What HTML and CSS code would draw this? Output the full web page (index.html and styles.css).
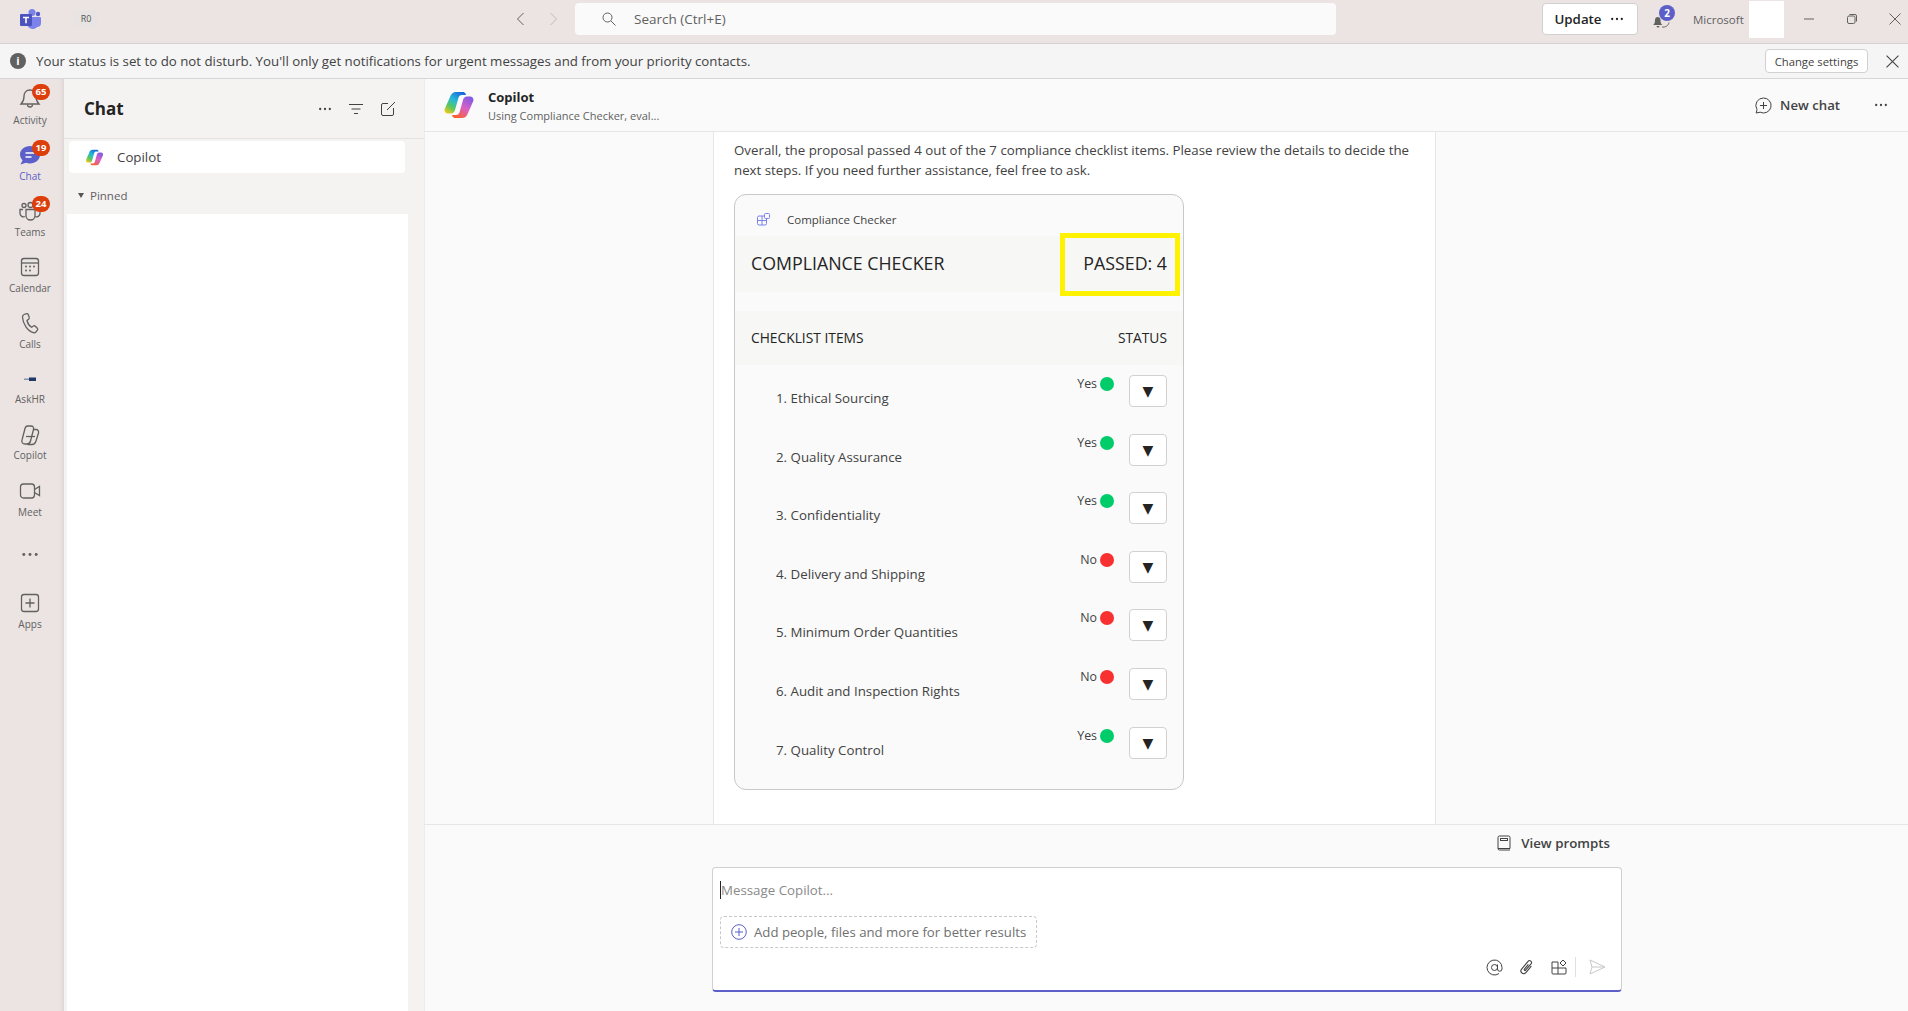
FILE: index.html
```html
<!DOCTYPE html>
<html lang="en">
<head>
    <meta charset="UTF-8">
    <meta name="viewport" content="width=device-width, initial-scale=1.0">
    <title>Microsoft Teams - Copilot</title>
    <link rel="stylesheet" href="styles.css">
</head>
<body>
    <svg class="defs" width="0" height="0" aria-hidden="true">
        <defs>
            <linearGradient id="copA" x1="0.75" y1="0" x2="0.15" y2="1">
                <stop offset="0" stop-color="#1668dc"/>
                <stop offset="0.4" stop-color="#26b8d8"/>
                <stop offset="0.72" stop-color="#5cc85a"/>
                <stop offset="1" stop-color="#f4c91c"/>
            </linearGradient>
            <linearGradient id="copB" x1="0.8" y1="0" x2="0.25" y2="1">
                <stop offset="0" stop-color="#7d5be8"/>
                <stop offset="0.5" stop-color="#d861c4"/>
                <stop offset="1" stop-color="#f8622e"/>
            </linearGradient>
            <symbol id="copilot" viewBox="0 0 32 32">
                <path fill="url(#copA)" d="M13 3h7c1 0 2 .6 2.500 1.500L23 6h-4c-2 0-3 1-3.600 3L12 21c-.6 2-2 3.500-4 3.500H5c-2.500 0-4-2.200-3.300-4.500L7 8c.9-3 3-5 6-5z"/>
                <path fill="url(#copB)" d="M19 29h-7c-1 0-2-.6-2.500-1.500L9 26h4c2 0 3-1 3.600-3L20 11c.6-2 2-3.500 4-3.500h3c2.500 0 4 2.200 3.300 4.500L25 24c-.9 3-3 5-6 5z"/>
            </symbol>
            <symbol id="dots" viewBox="0 0 16 4">
                <circle cx="2.500" cy="2" r="1.300" fill="currentColor"/>
                <circle cx="8" cy="2" r="1.300" fill="currentColor"/>
                <circle cx="13.500" cy="2" r="1.300" fill="currentColor"/>
            </symbol>
            <symbol id="cross" viewBox="0 0 12 12">
                <path d="M.5.500l11 11M11.500.500l-11 11" fill="none" stroke="currentColor"/>
            </symbol>
        </defs>
    </svg>

    <header class="topbar">
        <div class="top-left">
            <svg class="teams-logo" width="22" height="20" viewBox="0 0 22 20">
                <circle cx="19" cy="5" r="2.200" fill="#5059c9"/>
                <circle cx="13" cy="3.500" r="3.500" fill="#7b83eb"/>
                <path d="M8 8h13a1 1 0 0 1 1 1v5a4 4 0 0 1-4 4c-1 1.500-3 2-4.500 2A6 6 0 0 1 8 15z" fill="#7b83eb"/>
                <rect x="1" y="5" width="12" height="12" rx="1" fill="#4b53bc"/>
                <path d="M4 7.800h6v1.500H7.800v5H6.200v-5H4z" fill="#fff"/>
            </svg>
            <span class="org-chip">R0</span>
        </div>
        <div class="top-center">
            <svg class="nav-arrow" width="9" height="14" viewBox="0 0 9 14"><path d="M7.500 1L1.500 7l6 6" fill="none" stroke="#616161"/></svg>
            <svg class="nav-arrow" width="9" height="14" viewBox="0 0 9 14"><path d="M1.500 1l6 6-6 6" fill="none" stroke="#bdbdbd"/></svg>
            <div class="searchbox">
                <svg width="14" height="14" viewBox="0 0 14 14"><circle cx="5.500" cy="5.500" r="4.500" fill="none" stroke="#616161"/><path d="M9 9l4.500 4.500" stroke="#616161"/></svg>
                <span>Search (Ctrl+E)</span>
            </div>
        </div>
        <div class="top-right">
            <button class="update-btn">Update <svg width="14" height="4"><use href="#dots"/></svg></button>
            <div class="bell">
                <svg width="20" height="18" viewBox="0 0 20 18">
                    <path d="M1 15c1.500-1 2-2.500 2-5 0-2 1.200-3 2.800-3S8.500 8 8.500 10c0 2.500.5 4 2 5z" fill="#616161"/>
                    <path d="M4.500 16h3a1.500 1.500 0 0 1-3 0z" fill="#616161"/>
                    <path d="M10 17c3.500.5 6.500-1.500 7-4.500" fill="none" stroke="#616161"/>
                </svg>
                <span class="bell-count">2</span>
            </div>
            <span class="org-name">Microsoft</span>
            <div class="avatar-blank"></div>
            <div class="window-btns">
                <svg width="12" height="12" viewBox="0 0 12 12"><path d="M1 6h10" stroke="#616161"/></svg>
                <svg width="12" height="12" viewBox="0 0 12 12"><rect x="1.500" y="3" width="7.500" height="7.500" rx="1.500" fill="none" stroke="#616161"/><path d="M3.500 1.500H9a1.500 1.500 0 0 1 1.500 1.500v5.500" fill="none" stroke="#616161"/></svg>
                <svg width="12" height="12" color="#616161"><use href="#cross"/></svg>
            </div>
        </div>
    </header>

    <div class="notice">
        <span class="info-dot">i</span>
        <span class="notice-text">Your status is set to do not disturb. You'll only get notifications for urgent messages and from your priority contacts.</span>
        <button class="notice-btn">Change settings</button>
        <svg class="notice-close" width="13" height="13" color="#424242"><use href="#cross"/></svg>
    </div>

    <div class="app">
        <nav class="rail">
            <a class="rail-item">
                <svg width="24" height="24" viewBox="0 0 24 24" fill="none" stroke="#616161" stroke-width="1.300"><path d="M12 3c-4 0-6 3-6 6.500 0 4-1.500 6-3 7.500h18c-1.500-1.500-3-3.500-3-7.500C18 6 16 3 12 3z"/><path d="M9.500 17.500a2.500 2.500 0 0 0 5 0"/></svg>
                <span class="badge">65</span>
                <span>Activity</span>
            </a>
            <a class="rail-item active">
                <svg width="24" height="24" viewBox="0 0 24 24"><path d="M12 3c-5.500 0-10 3.800-10 8.500 0 2.200 1 4.200 2.600 5.700L2.500 21.500l5.500-1.800c1.200.5 2.600.8 4 .8 5.500 0 10-3.800 10-8.500S17.500 3 12 3z" fill="#5b5fc7"/><path d="M7.500 10h9M7.500 14h6" stroke="#fff" stroke-width="1.400"/></svg>
                <span class="badge">19</span>
                <span>Chat</span>
            </a>
            <a class="rail-item">
                <svg width="24" height="24" viewBox="0 0 24 24" fill="none" stroke="#616161" stroke-width="1.300"><circle cx="6" cy="6.500" r="2"/><circle cx="12.500" cy="6" r="2.500"/><path d="M8 10.500h9v6a4.500 4.500 0 0 1-9 0z"/><path d="M5 10.500H2v4a3.500 3.500 0 0 0 5 3M18 10.500h4v4a3.500 3.500 0 0 1-5 3"/></svg>
                <span class="badge">24</span>
                <span>Teams</span>
            </a>
            <a class="rail-item">
                <svg width="24" height="24" viewBox="0 0 24 24" fill="none" stroke="#616161" stroke-width="1.300"><rect x="3.500" y="3.500" width="17" height="17" rx="2.500"/><path d="M3.500 8h17"/><g fill="#616161" stroke="none"><circle cx="8" cy="11.500" r="1"/><circle cx="12" cy="11.500" r="1"/><circle cx="16" cy="11.500" r="1"/><circle cx="8" cy="15.500" r="1"/><circle cx="12" cy="15.500" r="1"/></g></svg>
                <span>Calendar</span>
            </a>
            <a class="rail-item">
                <svg width="24" height="24" viewBox="0 0 24 24" fill="none" stroke="#616161" stroke-width="1.300"><path d="M6 3.500l2.500-.8c.8-.2 1.400.2 1.700.9l1 2.600c.3.700.1 1.300-.4 1.800L9 9.500c.5 2.500 2.500 5.500 4.500 6.800l2-1.300c.6-.4 1.300-.3 1.800.2l2 2c.5.600.6 1.300.1 1.900l-1.500 1.900c-.6.700-1.500 1-2.400.7C9.500 20 5 13 4.500 6.200c-.1-1.200.5-2.300 1.500-2.700z"/></svg>
                <span>Calls</span>
            </a>
            <a class="rail-item tight">
                <svg width="24" height="24" viewBox="0 0 24 24"><rect x="6" y="11.500" width="5" height="1.500" fill="#8a94a8"/><rect x="11" y="10.500" width="7" height="3.500" fill="#1f3864"/></svg>
                <span>AskHR</span>
            </a>
            <a class="rail-item tight">
                <svg width="24" height="24" viewBox="0 0 24 24" fill="none" stroke="#616161" stroke-width="1.300"><path d="M9.500 3h3.500c2 0 3 1.500 2.500 3.500l-3 11.500c-.4 1.800-1.500 3-3.500 3H7c-2.500 0-3.700-2-3-4l3-11.500C7.400 4 8.200 3 9.500 3z"/><path d="M15 6.500h3c2 0 3 1.600 2.500 3.500l-2.500 8c-.6 2-2 3.500-4 3.500H9.500"/><path d="M8 13.500h9"/></svg>
                <span>Copilot</span>
            </a>
            <a class="rail-item">
                <svg width="24" height="24" viewBox="0 0 24 24" fill="none" stroke="#616161" stroke-width="1.300"><rect x="2.500" y="5" width="14" height="14" rx="3"/><path d="M16.500 10.500l5-3v9l-5-3"/></svg>
                <span>Meet</span>
            </a>
            <a class="rail-more"><svg width="18" height="5" color="#616161"><use href="#dots"/></svg></a>
            <a class="rail-item">
                <svg width="24" height="24" viewBox="0 0 24 24" fill="none" stroke="#616161" stroke-width="1.300"><rect x="3.500" y="3.500" width="17" height="17" rx="2.500"/><path d="M12 7.500v9M7.500 12h9"/></svg>
                <span>Apps</span>
            </a>
        </nav>

        <aside class="chatlist">
            <div class="chatlist-head">
                <h2>Chat</h2>
                <svg width="14" height="4" color="#424242"><use href="#dots"/></svg>
                <svg width="16" height="12" viewBox="0 0 16 12"><path d="M1 1.500h14M3.500 6h9M6 10.500h4" stroke="#424242"/></svg>
                <svg width="16" height="16" viewBox="0 0 16 16" fill="none" stroke="#424242"><path d="M8 2.500H3A1.500 1.500 0 0 0 1.500 4v9A1.500 1.500 0 0 0 3 14.500h9a1.500 1.500 0 0 0 1.500-1.500V7"/><path d="M7 9l8-8"/></svg>
            </div>
            <div class="chatlist-row">
                <svg width="19" height="19"><use href="#copilot"/></svg>
                <span>Copilot</span>
            </div>
            <div class="pinned"><span class="caret"></span>Pinned</div>
            <div class="chatlist-blank"></div>
        </aside>

        <main class="conv">
            <div class="conv-head">
                <svg width="32" height="32"><use href="#copilot"/></svg>
                <div class="conv-title">
                    <strong>Copilot</strong>
                    <span>Using Compliance Checker, eval...</span>
                </div>
                <div class="conv-actions">
                    <svg width="17" height="17" viewBox="0 0 17 17" fill="none" stroke="#424242"><path d="M8.500 1a7.500 7.500 0 1 1-3.300 14.200L1.200 16l.8-3.500A7.500 7.500 0 0 1 8.500 1z"/><path d="M8.500 5v7M5 8.500h7"/></svg>
                    <span>New chat</span>
                    <svg class="conv-dots" width="14" height="4" color="#424242"><use href="#dots"/></svg>
                </div>
            </div>

            <div class="scroll-area">
                <div class="message">
                    <p>Overall, the proposal passed 4 out of the 7 compliance checklist items. Please review the details to decide the next steps. If you need further assistance, feel free to ask.</p>
                    <div class="card">
                        <div class="card-top">
                            <svg width="13" height="13" viewBox="0 0 13 13" fill="none" stroke="#7b83eb"><rect x=".5" y="3" width="9" height="9" rx="1.500"/><path d="M5 3v9M.5 7.500h9"/><rect x="7.500" y=".5" width="5" height="5" rx="1" fill="#fafafa"/></svg>
                            <span>Compliance Checker</span>
                        </div>
                        <div class="card-band">
                            <span>COMPLIANCE CHECKER</span>
                            <span>PASSED: 4</span>
                            <div class="highlight"></div>
                        </div>
                        <div class="card-cols">
                            <span>CHECKLIST ITEMS</span>
                            <span>STATUS</span>
                        </div>
                        <div class="check-row">
                            <span class="check-name">1. Ethical Sourcing</span>
                            <span class="check-val">Yes</span><span class="dot green"></span>
                            <button class="expand">&#9660;</button>
                        </div>
                        <div class="check-row">
                            <span class="check-name">2. Quality Assurance</span>
                            <span class="check-val">Yes</span><span class="dot green"></span>
                            <button class="expand">&#9660;</button>
                        </div>
                        <div class="check-row">
                            <span class="check-name">3. Confidentiality</span>
                            <span class="check-val">Yes</span><span class="dot green"></span>
                            <button class="expand">&#9660;</button>
                        </div>
                        <div class="check-row">
                            <span class="check-name">4. Delivery and Shipping</span>
                            <span class="check-val">No</span><span class="dot red"></span>
                            <button class="expand">&#9660;</button>
                        </div>
                        <div class="check-row">
                            <span class="check-name">5. Minimum Order Quantities</span>
                            <span class="check-val">No</span><span class="dot red"></span>
                            <button class="expand">&#9660;</button>
                        </div>
                        <div class="check-row">
                            <span class="check-name">6. Audit and Inspection Rights</span>
                            <span class="check-val">No</span><span class="dot red"></span>
                            <button class="expand">&#9660;</button>
                        </div>
                        <div class="check-row">
                            <span class="check-name">7. Quality Control</span>
                            <span class="check-val">Yes</span><span class="dot green"></span>
                            <button class="expand">&#9660;</button>
                        </div>
                    </div>
                </div>
            </div>

            <div class="compose-area">
                <div class="prompts">
                    <svg width="14" height="16" viewBox="0 0 14 16" fill="none" stroke="#424242"><path d="M1 13.500V2.500A1.500 1.500 0 0 1 2.500 1h9A1.500 1.500 0 0 1 13 2.500v11z"/><path d="M1 13.500A1.500 1.500 0 0 0 2.500 15H13"/><rect x="3.500" y="3.500" width="7" height="2"/></svg>
                    <span>View prompts</span>
                </div>
                <div class="composer">
                    <div class="placeholder"><span class="cursor"></span>Message Copilot...</div>
                    <div class="add-ctx">
                        <svg width="16" height="16" viewBox="0 0 16 16" fill="none" stroke="#5b5fc7"><circle cx="8" cy="8" r="7.300"/><path d="M8 4v8M4 8h8"/></svg>
                        <span>Add people, files and more for better results</span>
                    </div>
                    <div class="composer-tools">
                        <svg width="17" height="17" viewBox="0 0 17 17" fill="none" stroke="#424242"><circle cx="8.500" cy="8.500" r="3"/><path d="M11.500 5.500V10a2.200 2.200 0 0 0 4.500 0V8.500a7.500 7.500 0 1 0-3 6"/></svg>
                        <svg width="18" height="18" viewBox="0 0 16 16" fill="none" stroke="#424242"><path transform="rotate(40 8 8)" d="M10.500 5v7.500a2.500 2.500 0 0 1-5 0V3.500a1.700 1.700 0 0 1 3.400 0V11a.7.7 0 0 1-1.400 0V5.500"/></svg>
                        <svg width="16" height="16" viewBox="0 0 16 16" fill="none" stroke="#424242"><path d="M1 3h6v12H2a1 1 0 0 1-1-1zM7 9h8v5a1 1 0 0 1-1 1H7M1 9h6"/><path d="M12 1l3 3-3 3-3-3z"/></svg>
                        <span class="tool-sep"></span>
                        <svg width="17" height="16" viewBox="0 0 17 16" fill="none" stroke="#c8c8c8"><path d="M1 1l15 7-15 7 2-7zM3 8h13"/></svg>
                    </div>
                </div>
            </div>
        </main>
    </div>
</body>
</html>
```

FILE: styles.css
```css
* {
    box-sizing: border-box;
}
html, body {
    margin: 0;
    height: 100%;
}
body {
    font-family: "Open Sans", "Noto Sans", sans-serif;
    font-size: 13.3px;
    color: #424242;
    display: flex;
    flex-direction: column;
    height: 1011px;
    overflow: hidden;
    background: #fafafa;
}
button {
    font-family: inherit;
}
.defs {
    position: absolute;
}

/* top bar */
.topbar {
    height: 44px;
    flex: none;
    display: flex;
    align-items: center;
    padding-bottom: 5px;
    background: #ebe4e3;
    border-bottom: 1px solid #d6d2d2;
}
.top-left {
    width: 516px;
    display: flex;
    align-items: center;
    padding-left: 19px;
}
.teams-logo {
    margin-right: 33px;
}
.org-chip {
    width: 24px;
    height: 16px;
    line-height: 16px;
    background: #e8e4e3;
    border-radius: 3px;
    text-align: center;
    font-size: 9px;
    color: #555;
}
.top-center {
    display: flex;
    align-items: center;
    gap: 24px;
}
.searchbox {
    width: 761px;
    height: 32px;
    margin-left: -7px;
    background: #fafafa;
    border-radius: 4px;
    display: flex;
    align-items: center;
    gap: 18px;
    padding-left: 27px;
    font-size: 13.5px;
    color: #616161;
}
.top-right {
    flex: 1;
    display: flex;
    align-items: center;
    justify-content: flex-end;
}
.update-btn {
    width: 96px;
    height: 32px;
    padding-right: 8px;
    background: #fff;
    border: 1px solid #d1d1d1;
    border-radius: 4px;
    font-size: 13.3px;
    font-weight: 600;
    color: #242424;
    display: flex;
    align-items: center;
    justify-content: center;
    gap: 8px;
    margin-right: 14px;
}
.bell {
    position: relative;
    width: 20px;
    height: 18px;
    margin-right: 21px;
}
.bell svg {
    display: block;
}
.bell-count {
    position: absolute;
    top: -5px;
    left: 7px;
    width: 16px;
    height: 16px;
    border-radius: 50%;
    background: #5b5fc7;
    color: #fff;
    font-size: 10px;
    font-weight: 700;
    line-height: 16px;
    text-align: center;
}
.org-name {
    font-size: 11.5px;
    color: #616161;
    width: 56px;
}
.avatar-blank {
    width: 35px;
    height: 37px;
    background: #fff;
}
.window-btns {
    display: flex;
    align-items: center;
    gap: 31px;
    margin-left: 19px;
    margin-right: 7px;
}

/* status notice */
.notice {
    height: 35px;
    flex: none;
    display: flex;
    align-items: center;
    padding-left: 10px;
    background: #f5f5f5;
    border-bottom: 1px solid #d6d6d6;
}
.info-dot {
    width: 16px;
    height: 16px;
    border-radius: 50%;
    background: #616161;
    color: #fff;
    font-size: 11px;
    font-weight: 700;
    line-height: 16px;
    text-align: center;
    margin-right: 10px;
}
.notice-text {
    flex: 1;
    font-size: 13.28px;
}
.notice-btn {
    width: 103px;
    height: 24px;
    padding: 0;
    background: #fff;
    border: 1px solid #d1d1d1;
    border-radius: 4px;
    font-size: 11.3px;
    color: #424242;
}
.notice-close {
    margin-left: 18px;
    margin-right: 9px;
}

.app {
    flex: 1;
    display: flex;
    min-height: 0;
}

/* left rail */
.rail {
    width: 64px;
    flex: none;
    padding-right: 4px;
    background: #ebe4e3;
    box-shadow: inset -4px 0 4px -3px #d8d0cf;
    display: flex;
    flex-direction: column;
}
.rail-item {
    position: relative;
    height: 56px;
    padding-top: 8px;
    display: flex;
    flex-direction: column;
    align-items: center;
    font-size: 10px;
    line-height: 14px;
    color: #616161;
}
.rail-item svg {
    display: block;
    margin-bottom: 2px;
}
.rail-item.tight svg {
    margin-bottom: 1px;
}
.rail-item.active {
    color: #5b5fc7;
}
.rail-more {
    height: 56px;
    padding-bottom: 2px;
    display: flex;
    align-items: center;
    justify-content: center;
}
.badge {
    position: absolute;
    top: 5px;
    left: 32px;
    width: 18px;
    height: 16px;
    border-radius: 8px;
    background: #dc3e0c;
    color: #fff;
    font-size: 9.5px;
    font-weight: 700;
    line-height: 16px;
    text-align: center;
}

/* chat list */
.chatlist {
    width: 360px;
    flex: none;
    background: #f5f2f2;
    display: flex;
    flex-direction: column;
}
.chatlist-head {
    height: 60px;
    flex: none;
    display: flex;
    align-items: center;
    gap: 16px;
    padding: 0 28px 0 20px;
    border-bottom: 1px solid #e4e1e1;
}
.chatlist-head h2 {
    flex: 1;
    margin: 0;
    font-size: 17px;
    font-weight: 700;
    color: #242424;
}
.chatlist-row {
    height: 32px;
    margin: 2px 19px 0 5px;
    padding-left: 16px;
    background: #fff;
    border-radius: 4px;
    display: flex;
    align-items: center;
    gap: 13px;
}
.pinned {
    height: 41px;
    padding: 4px 0 0 14px;
    display: flex;
    align-items: center;
    font-size: 11.5px;
    color: #616161;
}
.caret {
    width: 0;
    height: 0;
    border-left: 3.5px solid transparent;
    border-right: 3.5px solid transparent;
    border-top: 5px solid #555;
    margin-right: 6px;
}
.chatlist-blank {
    flex: 1;
    margin: 0 16px 0 3px;
    background: #fff;
}

/* conversation */
.conv {
    flex: 1;
    min-width: 0;
    display: flex;
    flex-direction: column;
    background: #fafafa;
    box-shadow: inset 1px 0 0 #ececec;
}
.conv-head {
    height: 53px;
    flex: none;
    display: flex;
    align-items: center;
    padding-left: 19px;
    border-bottom: 1px solid #e6e6e6;
}
.conv-title {
    flex: 1;
    margin-left: 13px;
    display: flex;
    flex-direction: column;
    gap: 2px;
}
.conv-title strong {
    font-size: 13px;
    font-weight: 700;
    color: #242424;
}
.conv-title span {
    font-size: 11px;
    color: #616161;
}
.conv-actions {
    display: flex;
    align-items: center;
    gap: 8px;
    padding-right: 20px;
    font-size: 13.2px;
    font-weight: 600;
}
.conv-dots {
    margin-left: 26px;
}
.scroll-area {
    flex: 1;
    min-height: 0;
    padding-left: 289px;
    border-bottom: 1px solid #e6e6e6;
}
.message {
    width: 723px;
    height: 100%;
    padding: 8px 0 0 20px;
    background: #fff;
    border-left: 1px solid #e6e6e6;
    border-right: 1px solid #e6e6e6;
}
.message p {
    margin: 0 0 14px;
    line-height: 20px;
    width: 690px;
}
.card {
    width: 450px;
    height: 596px;
    background: #fafafa;
    border: 1px solid #c8c8c8;
    border-radius: 12px;
    display: flex;
    flex-direction: column;
}
.card-top {
    height: 41px;
    flex: none;
    display: flex;
    align-items: center;
    gap: 17px;
    padding: 8px 0 0 22px;
    font-size: 11.5px;
}
.card-band {
    position: relative;
    height: 56px;
    flex: none;
    display: flex;
    align-items: center;
    justify-content: space-between;
    padding: 0 16px 2px;
    margin-bottom: 19px;
    background: #f7f7f6;
    font-size: 17.8px;
    color: #242424;
}
.highlight {
    position: absolute;
    top: -3px;
    right: 3px;
    width: 120px;
    height: 63px;
    border: 5px solid #fff200;
}
.card-cols {
    height: 54px;
    flex: none;
    display: flex;
    align-items: center;
    justify-content: space-between;
    padding: 0 16px 2px;
    background: #f7f7f6;
    font-size: 13.8px;
    color: #242424;
}
.check-row {
    flex: none;
    height: 58.6px;
    padding: 10px 16px 0 41px;
    display: flex;
    align-items: flex-start;
}
.check-name {
    flex: 1;
    margin-top: 14px;
}
.check-val {
    font-size: 12.4px;
}
.dot {
    width: 14px;
    height: 14px;
    margin-top: 2px;
    margin-left: 3px;
    margin-right: 15px;
    border-radius: 50%;
}
.green {
    background: #00cc6a;
}
.red {
    background: #f8302f;
}
.expand {
    width: 38px;
    height: 32px;
    padding: 0;
    background: #fff;
    border: 1px solid #d1d1d1;
    border-radius: 4px;
    font-family: "DejaVu Sans", sans-serif;
    font-size: 14px;
    color: #242424;
}

/* composer */
.compose-area {
    height: 186px;
    flex: none;
    padding: 0 0 0 288px;
}
.prompts {
    width: 910px;
    height: 42px;
    display: flex;
    align-items: center;
    justify-content: flex-end;
    gap: 10px;
    padding: 0 12px 6px 0;
    font-weight: 600;
}
.composer {
    position: relative;
    width: 910px;
    height: 125px;
    padding: 12px 7px 0;
    background: #fff;
    border: 1px solid #d1d1d1;
    border-bottom: 2px solid #5b5fc7;
    border-radius: 4px;
}
.placeholder {
    display: flex;
    align-items: center;
    height: 20px;
    color: #8a8a8a;
}
.cursor {
    width: 1px;
    height: 18px;
    background: #242424;
}
.add-ctx {
    width: 317px;
    height: 32px;
    margin-top: 16px;
    display: flex;
    align-items: center;
    gap: 7px;
    padding-left: 10px;
    border: 1px dashed #c8c8c8;
    border-radius: 4px;
    font-size: 13.2px;
    color: #707070;
    white-space: nowrap;
}
.composer-tools {
    position: absolute;
    right: 15px;
    bottom: 13px;
    display: flex;
    align-items: center;
    gap: 15px;
}
.tool-sep {
    width: 1px;
    height: 20px;
    margin: 0 -2px 0 -7px;
    background: #e0e0e0;
}
```
